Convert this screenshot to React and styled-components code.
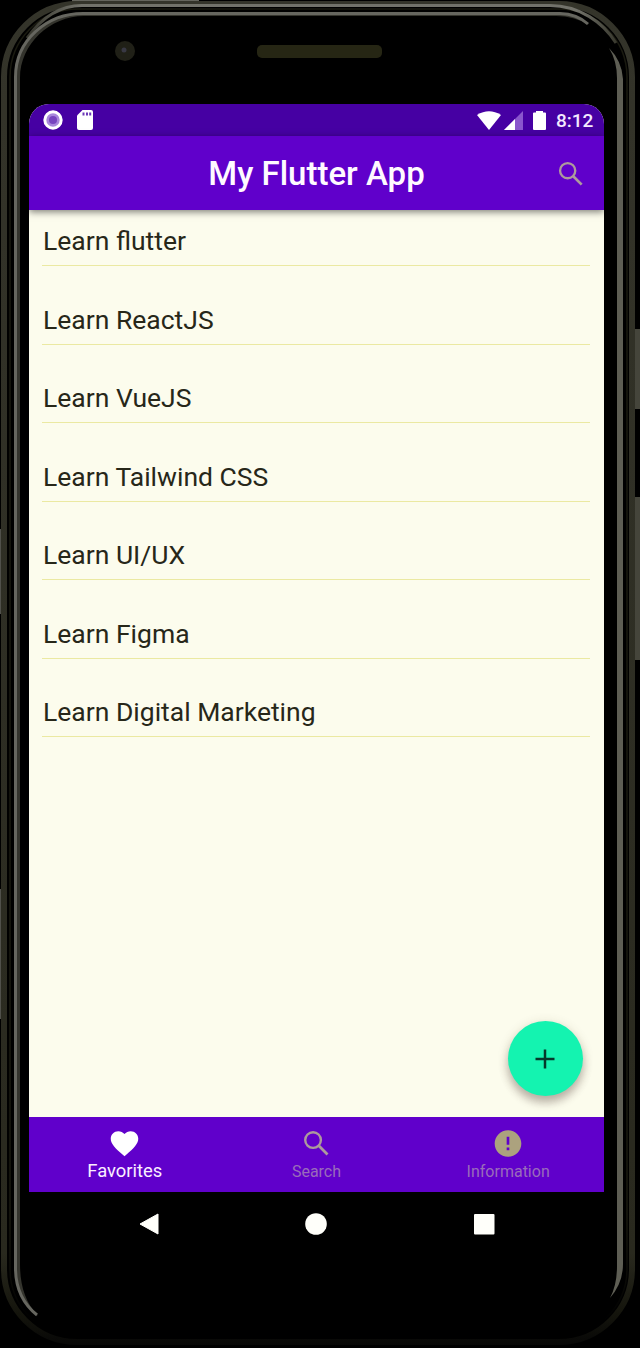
import React from "react";
import styled, { createGlobalStyle } from "styled-components";

const Global = createGlobalStyle`
  * { box-sizing: border-box; }
  body { margin: 0; background: #000; font-family: Roboto, "Liberation Sans", sans-serif; }
  svg { display: block; }
`;

const Device = styled.main`
  position: relative;
  width: 640px;
  height: 1348px;
  overflow: hidden;
  background: #000;
  padding: 104px 36px 0 29px;
`;

const Hardware = styled.svg`
  position: absolute;
  inset: 0;
`;

const Screen = styled.section`
  position: relative;
  width: 575px;
  height: 1152px;
  display: flex;
  flex-direction: column;
  border-radius: 20px 20px 0 0;
  overflow: hidden;
  background: #fcfced;
`;

const StatusBar = styled.div`
  flex: none;
  height: 32px;
  padding: 0 10px 0 14px;
  display: flex;
  align-items: center;
  justify-content: space-between;
  background: #4600a3;
  color: #f3eaff;
`;

const StatusGroup = styled.div`
  display: flex;
  align-items: center;
  gap: ${(p) => p.$gap}px;
`;

const Clock = styled.time`
  font-size: 19px;
  font-weight: 500;
  line-height: 32px;
  padding-top: 2px;
  margin-left: 7px;
  width: 38px;
  white-space: nowrap;
`;

const AppBar = styled.header`
  flex: none;
  position: relative;
  z-index: 1;
  height: 74px;
  padding: 1px 20px 0;
  display: grid;
  grid-template-columns: 26px 1fr 26px;
  align-items: center;
  background: #6000cb;
  box-shadow: 0 2px 7px rgba(0, 0, 0, 0.5);
`;

const Title = styled.h1`
  grid-column: 2;
  margin: 0;
  font-size: 33px;
  font-weight: 500;
  line-height: 40px;
  text-align: center;
  color: #fffaff;
  white-space: nowrap;
`;

const SearchAction = styled.button`
  display: grid;
  place-items: center;
  width: 31px;
  height: 31px;
  margin-left: -3px;
  padding: 0;
  border: 0;
  background: none;
`;

const List = styled.ul`
  flex: 1;
  margin: 0;
  padding: 0 14px 0 13px;
  list-style: none;
`;

const Item = styled.li`
  height: 78.5px;
  padding: 15px 0 0 1px;
  font-size: 26.5px;
  line-height: 32px;
  color: #272719;
  white-space: nowrap;

  &::after {
    content: "";
    display: block;
    height: 1px;
    margin: 8px 0 0 -1px;
    background: #ebe9a2;
  }
`;

const AddButton = styled.button`
  position: absolute;
  right: 21px;
  bottom: 160px;
  width: 75px;
  height: 75px;
  padding: 0 1px 0 0;
  border: 0;
  border-radius: 50%;
  display: grid;
  place-items: center;
  background: #14f3b0;
  box-shadow: 0 7px 9px rgba(70, 50, 50, 0.3), 0 2px 12px rgba(80, 70, 40, 0.16);
`;

const TabBar = styled.nav`
  flex: none;
  height: 75px;
  display: grid;
  grid-template-columns: repeat(3, 1fr);
  background: #6000cb;
`;

const Tab = styled.a`
  display: flex;
  flex-direction: column;
  align-items: center;
  padding-top: 10px;
  color: ${(p) => (p.$active ? "#fff" : "#a99a9e")};
`;

const TabLabel = styled.span`
  font-size: ${(p) => (p.$active ? 18.4 : 16)}px;
  line-height: 22px;
  margin-top: ${(p) => (p.$active ? 0 : 1)}px;
  color: ${(p) => (p.$active ? "#fbeeff" : "#9a6cba")};
`;

const SystemNav = styled.div`
  flex: none;
  height: 64px;
  display: grid;
  grid-template-columns: 108px 24px 143px 24px 144px 24px;
  align-items: center;
  background: #000;
`;

const SearchGlyph = ({ size, color }) => (
  <svg width={size} height={size} viewBox="0 0 24 24" fill="none" stroke={color} strokeWidth="1.75">
    <circle cx="9.5" cy="9.5" r="5.7" />
    <path d="M13.7 13.7 20 20" strokeWidth="2" />
  </svg>
);

const Heart = () => (
  <svg width="33" height="33" viewBox="0 0 24 24" fill="#fff">
    <path d="M12 21.35l-1.45-1.32C5.4 15.36 2 12.28 2 8.5 2 5.42 4.42 3 7.5 3c1.74 0 3.41.81 4.5 2.09C13.09 3.81 14.76 3 16.5 3 19.58 3 22 5.42 22 8.5c0 3.78-3.4 6.86-8.55 11.54L12 21.35z" />
  </svg>
);

const ErrorGlyph = () => (
  <svg width="32" height="33" viewBox="0 0 24 24" fill="#aca27e">
    <path d="M12 2C6.48 2 2 6.48 2 12s4.48 10 10 10 10-4.48 10-10S17.52 2 12 2zm1 15h-2v-2h2v2zm0-4h-2V7h2v6z" />
  </svg>
);

const Bezel = () => (
  <Hardware width="640" height="1348" viewBox="0 0 640 1348" fill="none">
    <defs>
      <linearGradient id="rim" x1="0" y1="0" x2="0" y2="1348" gradientUnits="userSpaceOnUse">
        <stop offset="0" stopColor="#34342a" />
        <stop offset="0.93" stopColor="#29291e" />
        <stop offset="0.975" stopColor="#14140c" />
        <stop offset="1" stopColor="#060606" />
      </linearGradient>
      <linearGradient id="seam" x1="0" y1="0" x2="0" y2="1348" gradientUnits="userSpaceOnUse">
        <stop offset="0.9" stopColor="#1a1a10" />
        <stop offset="0.98" stopColor="#000" />
      </linearGradient>
      <linearGradient id="topEdge" x1="20" y1="0" x2="625" y2="0" gradientUnits="userSpaceOnUse">
        <stop offset="0" stopColor="#2d2d24" />
        <stop offset="0.1" stopColor="#72726a" />
        <stop offset="0.92" stopColor="#72726a" />
        <stop offset="1" stopColor="#2d2d22" />
      </linearGradient>
    </defs>
    <path d="M72 .8h127" stroke="#64645c" strokeWidth="1.6" />
    <path d="M637.5 329v80M637.5 497v163" stroke="#45453b" strokeWidth="5" />
    <path d="M634.5 409v88" stroke="#45453b" />
    <path d="M.5 529v85M.5 889v130" stroke="#50504a" />
    <rect x="4" y="4" width="628" height="1338" rx="73" stroke="url(#rim)" strokeWidth="6" />
    <rect x="10" y="9" width="617" height="1328" rx="68" stroke="url(#seam)" strokeWidth="1.5" />
    <path d="M27 38C42 17 59 5.5 82 5.5H550C579 5.5 603 22 616 43" stroke="url(#topEdge)" strokeWidth="3" />
    <path d="M38 1316C23 1304 16 1287 16 1268V77C16 40 47 13.5 83 13.5H558Q576 14 589 25Q574 16 556 16H84C50 16 20 44 20 78V1264C20 1285 25 1302 38 1316Z" fill="#34342d" />
    <path d="M37 1315C22 1303 15.5 1287 15.5 1268V77C15.5 40 47 13.5 83 13.5H560Q577 14 588 24" stroke="#66665f" strokeWidth="3" />
    <path d="M609 48Q617 61 617 78V1266Q617 1285 610 1298Q623 1283 623 1264V79Q622 61 609 48Z" fill="#5e5e54" />
    <circle cx="125" cy="51" r="10" fill="#202017" />
    <circle cx="124" cy="50" r="2.5" fill="#383844" />
    <rect x="257" y="45" width="125" height="13" rx="5" fill="#262614" />
  </Hardware>
);

const items = [
  "Learn flutter",
  "Learn ReactJS",
  "Learn VueJS",
  "Learn Tailwind CSS",
  "Learn UI/UX",
  "Learn Figma",
  "Learn Digital Marketing",
];

export default function App() {
  return (
    <>
      <Global />
      <Device>
        <Bezel />
        <Screen>
          <StatusBar>
            <StatusGroup $gap={14}>
              <svg width="20" height="20" viewBox="0 0 20 20">
                <circle cx="10" cy="10" r="8.2" fill="#a887dc" stroke="#fff" strokeWidth="3" />
                <circle cx="10" cy="10" r="4" fill="#7745bf" />
              </svg>
              <svg width="16" height="20" viewBox="0 0 16 20">
                <path d="M5.5 0H14a2 2 0 0 1 2 2V18a2 2 0 0 1-2 2H2a2 2 0 0 1-2-2V5.5Z" fill="#fff" />
                <path d="M6.5 2.5v3M10 2.5v3M13.2 2.5v3" stroke="#6c38b8" strokeWidth="2" />
              </svg>
            </StatusGroup>
            <StatusGroup $gap={3}>
              <svg width="24" height="19" viewBox="0 0 24 19">
                <path d="M0 4Q12-3.5 24 4L12 19Z" fill="#fff" />
              </svg>
              <svg width="19" height="19" viewBox="0 0 19 19">
                <path d="M19 0V19H0Z" fill="#8a56cd" />
                <path d="M11 8V19H0Z" fill="#fff" />
              </svg>
              <svg width="20" height="19" viewBox="0 0 20 19">
                <path d="M10 0h7v1.5h2a1 1 0 0 1 1 1V18a1 1 0 0 1-1 1H8a1 1 0 0 1-1-1V2.5a1 1 0 0 1 1-1h2Z" fill="#fff" />
              </svg>
              <Clock>8:12</Clock>
            </StatusGroup>
          </StatusBar>
          <AppBar>
            <Title>My Flutter App</Title>
            <SearchAction aria-label="Search">
              <SearchGlyph size={32} color="#ad9a9c" />
            </SearchAction>
          </AppBar>
          <List>
            {items.map((t) => (
              <Item key={t}>{t}</Item>
            ))}
          </List>
          <TabBar>
            <Tab $active>
              <Heart />
              <TabLabel $active>Favorites</TabLabel>
            </Tab>
            <Tab>
              <SearchGlyph size={33} color="#ad9a9c" />
              <TabLabel>Search</TabLabel>
            </Tab>
            <Tab>
              <ErrorGlyph />
              <TabLabel>Information</TabLabel>
            </Tab>
          </TabBar>
          <SystemNav>
            <span />
            <svg width="24" height="24" viewBox="0 0 24 24">
              <path d="M3 12 21 2V22Z" fill="#fffffa" stroke="#fffffa" strokeLinejoin="round" />
            </svg>
            <span />
            <svg width="24" height="24" viewBox="0 0 24 24">
              <circle cx="12" cy="12" r="10.8" fill="#fffffa" />
            </svg>
            <span />
            <svg width="24" height="24" viewBox="0 0 24 24">
              <rect x="2" y="2" width="20.5" height="20.5" rx="1" fill="#fffffa" />
            </svg>
          </SystemNav>
          <AddButton aria-label="Add">
            <svg width="20" height="20" viewBox="0 0 20 20">
              <path d="M10 .5v19M.5 10h19" stroke="#06382b" strokeWidth="2.5" />
            </svg>
          </AddButton>
        </Screen>
      </Device>
    </>
  );
}
